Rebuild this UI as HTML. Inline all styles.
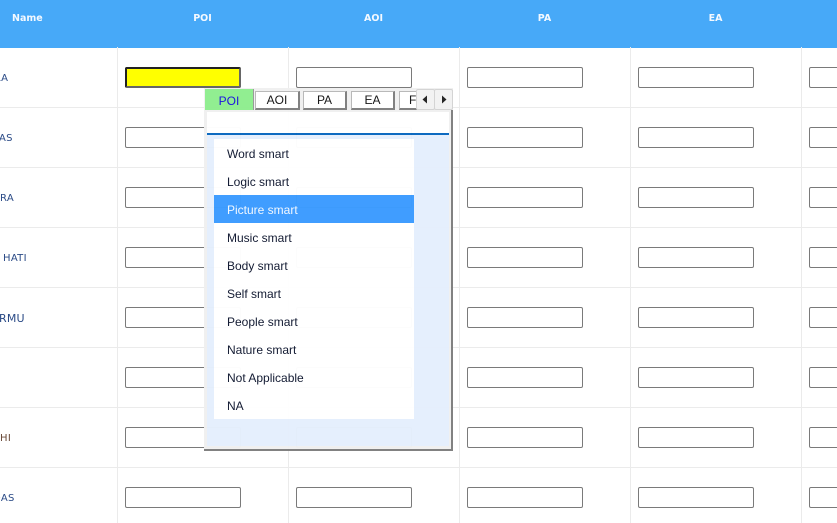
<!DOCTYPE html>
<html><head><meta charset="utf-8"><title>Grid</title>
<style>
html,body{margin:0;padding:0;background:#fff}
#p{position:relative;width:837px;height:523px;overflow:hidden;background:#fff;font-family:"DejaVu Sans","Liberation Sans",sans-serif}
.a{position:absolute}
#h{left:0;top:0;width:837px;height:48px;background:#47a9f8}
.th{position:absolute;top:12px;font-size:9.5px;font-weight:bold;color:#f4f9ff;line-height:13px;width:171px;text-align:center}
.hl{position:absolute;left:0;width:837px;height:1px;background:#ebebeb}
.vl{position:absolute;top:47px;width:1px;height:476px;background:#ebebeb}
.i{position:absolute;width:114px;height:19px;border:1px solid #7a7a7a;border-radius:2px;background:#fff}
.n{position:absolute;font-size:10px;line-height:12px;color:#2a4a86;white-space:nowrap;letter-spacing:.3px}
#pop{left:204px;top:88px;width:249px;height:363px;opacity:.985}
.tab{position:absolute;top:3px;height:16px;background:#fff;border:1px solid #b8b8b8;border-right:2px solid #7f7f7f;border-bottom:2px solid #7f7f7f;font:12px/16px "Liberation Sans",sans-serif;color:#141414;text-align:center;box-sizing:content-box;overflow:hidden}
.it{height:28px;padding-left:13px;font:12px/30px "Liberation Sans",sans-serif;color:#101830;white-space:nowrap}
.ar{position:absolute;top:1px;width:17px;height:19px;background:#f2f2f2;border:1px solid #d4d4d4;border-radius:2px}
</style></head><body><div id="p">
<div class="a" id="h"></div>
<div class="th" style="left:12px;width:auto">Name</div>
<div class="th" style="left:117px">POI</div>
<div class="th" style="left:288px">AOI</div>
<div class="th" style="left:459px">PA</div>
<div class="th" style="left:630px">EA</div>

<div class="hl" style="top:107px"></div><div class="hl" style="top:167px"></div><div class="hl" style="top:227px"></div><div class="hl" style="top:287px"></div><div class="hl" style="top:347px"></div><div class="hl" style="top:407px"></div><div class="hl" style="top:467px"></div>
<div class="vl" style="left:117px"></div><div class="vl" style="left:288px"></div><div class="vl" style="left:459px"></div><div class="vl" style="left:630px"></div><div class="vl" style="left:801px"></div>

<div class="n" style="left:-5px;top:73px">LA</div>
<div class="n" style="left:-1px;top:133px">AS</div>
<div class="n" style="left:0;top:193px">RA</div>
<div class="n" style="left:3px;top:253px">HATI</div>
<div class="n" style="left:-1px;top:313px;font-size:11px;letter-spacing:.2px">RMU</div>
<div class="n" style="left:0;top:433px;color:#6a4a38">HI</div>
<div class="n" style="left:-7px;top:493px">DAS</div>

<div class="i" style="left:125px;top:67px;height:17px;width:112px;background:#ff0;border:2px solid;border-color:#222 #666 #666 #222"></div>
<div class="i" style="left:296px;top:67px"></div><div class="i" style="left:467px;top:67px"></div><div class="i" style="left:638px;top:67px"></div><div class="i" style="left:809px;top:67px"></div>
<div class="i" style="left:125px;top:127px"></div><div class="i" style="left:296px;top:127px"></div><div class="i" style="left:467px;top:127px"></div><div class="i" style="left:638px;top:127px"></div><div class="i" style="left:809px;top:127px"></div>
<div class="i" style="left:125px;top:187px"></div><div class="i" style="left:296px;top:187px"></div><div class="i" style="left:467px;top:187px"></div><div class="i" style="left:638px;top:187px"></div><div class="i" style="left:809px;top:187px"></div>
<div class="i" style="left:125px;top:247px"></div><div class="i" style="left:296px;top:247px"></div><div class="i" style="left:467px;top:247px"></div><div class="i" style="left:638px;top:247px"></div><div class="i" style="left:809px;top:247px"></div>
<div class="i" style="left:125px;top:307px"></div><div class="i" style="left:296px;top:307px"></div><div class="i" style="left:467px;top:307px"></div><div class="i" style="left:638px;top:307px"></div><div class="i" style="left:809px;top:307px"></div>
<div class="i" style="left:125px;top:367px"></div><div class="i" style="left:296px;top:367px"></div><div class="i" style="left:467px;top:367px"></div><div class="i" style="left:638px;top:367px"></div><div class="i" style="left:809px;top:367px"></div>
<div class="i" style="left:125px;top:427px"></div><div class="i" style="left:296px;top:427px"></div><div class="i" style="left:467px;top:427px"></div><div class="i" style="left:638px;top:427px"></div><div class="i" style="left:809px;top:427px"></div>
<div class="i" style="left:125px;top:487px"></div><div class="i" style="left:296px;top:487px"></div><div class="i" style="left:467px;top:487px"></div><div class="i" style="left:638px;top:487px"></div><div class="i" style="left:809px;top:487px"></div>

<div class="a" id="pop">
  <div class="a" style="left:0;top:0;width:249px;height:23px;background:#f0f0f0"></div>
  <div class="a" style="left:1px;top:1px;width:48px;height:22px;background:#90ee90;border-right:1px solid #999;border-bottom:1px solid #999;font:12px/24px 'Liberation Sans',sans-serif;color:#1a10e0;text-align:center">POI</div>
  <div class="tab" style="left:51px;width:42px">AOI</div>
  <div class="tab" style="left:99px;width:41px">PA</div>
  <div class="tab" style="left:147px;width:41px">EA</div>
  <div class="tab" style="left:195px;text-align:left;padding-left:9px;width:8px;border-right:0">F</div>
  <div class="ar" style="left:212px"><svg width="17" height="19" style="display:block"><path d="M5.5 9.5L10 5.5V13.5Z" fill="#222"/></svg></div>
  <div class="ar" style="left:230px"><svg width="17" height="19" style="display:block"><path d="M11.5 9.5L7 5.5V13.5Z" fill="#222"/></svg></div>
  <div class="a" style="left:0;top:22px;width:247px;height:339px;background:#f0f0f0;border-right:2px solid #7f7f7f;border-bottom:2px solid #7f7f7f">
    <div class="a" style="left:3px;top:2px;width:242px;height:21px;background:#fff;border-bottom:2px solid #0a68bf"></div>
    <div class="a" style="left:3px;top:25px;width:242px;height:311px;background:#e5effd"></div>
    <div class="a" style="left:10px;top:29px;width:200px;height:280px;background:#fff">
      <div class="it">Word smart</div>
      <div class="it">Logic smart</div>
      <div class="it" style="background:#3d9cff;color:#f2f8ff">Picture smart</div>
      <div class="it">Music smart</div>
      <div class="it">Body smart</div>
      <div class="it">Self smart</div>
      <div class="it">People smart</div>
      <div class="it">Nature smart</div>
      <div class="it">Not Applicable</div>
      <div class="it">NA</div>
    </div>
  </div>
</div>
</div></body></html>
